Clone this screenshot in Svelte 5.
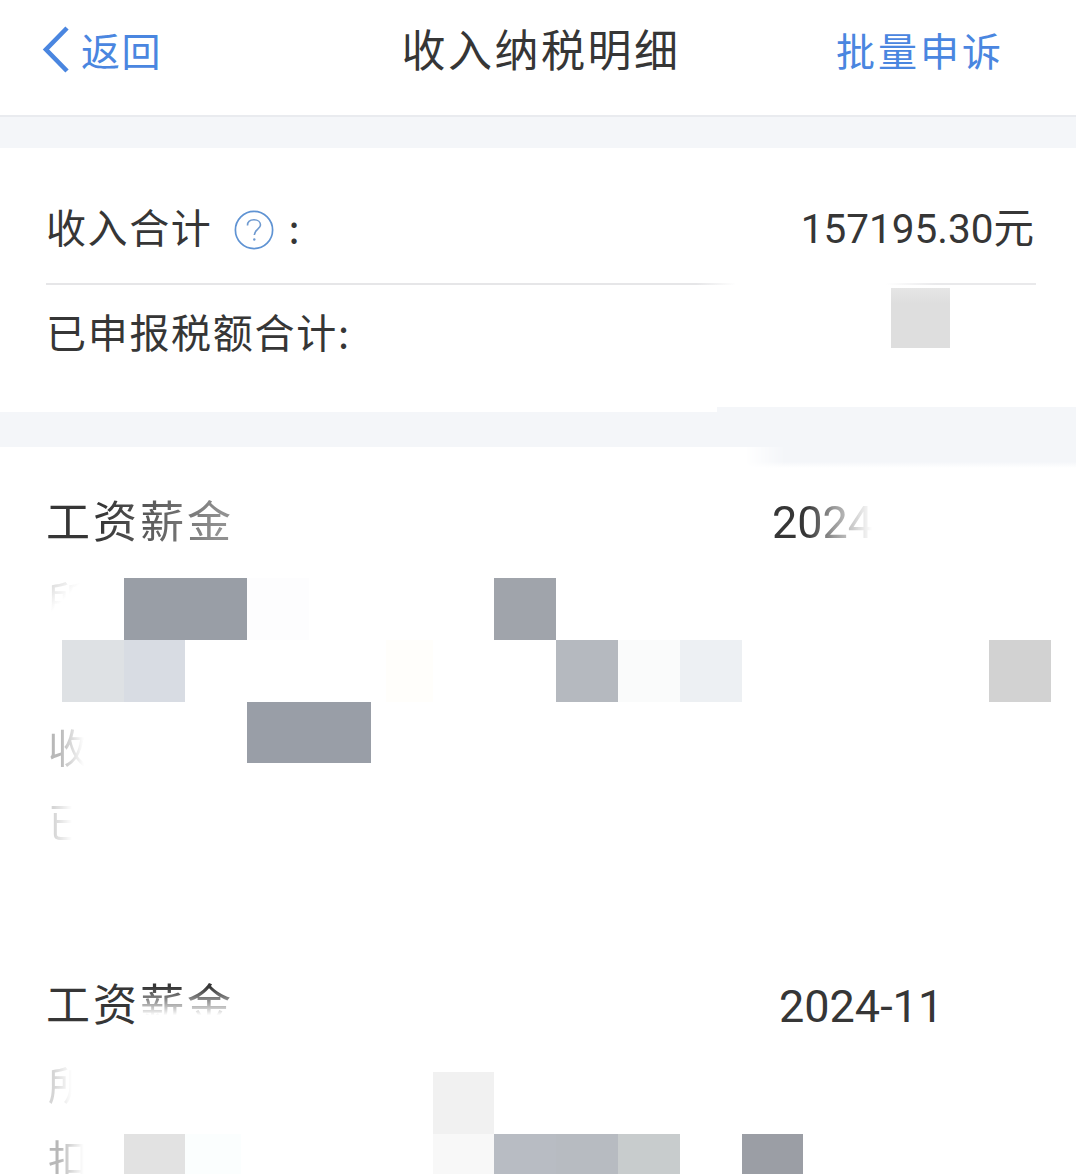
<script>
  const stepX = 61.8;
  const stepY = 61.75;
  const tiles = [
    { col: 2, row: 0, span: 2, color: '#999ea6' },
    { col: 4, row: 0, span: 1, color: '#fdfdfe' },
    { col: 8, row: 0, span: 1, color: '#a0a4ab' },
    { col: 1, row: 1, span: 1, color: '#dee1e4' },
    { col: 2, row: 1, span: 1, color: '#d8dce3' },
    { col: 6.25, row: 1, span: 0.75, color: '#fffefb' },
    { col: 9, row: 1, span: 1, color: '#b5b9bf' },
    { col: 10, row: 1, span: 1, color: '#fafbfb' },
    { col: 11, row: 1, span: 1, color: '#edf0f3' },
    { col: 16, row: 1, span: 1, color: '#d2d2d2' },
    { col: 4, row: 2, span: 2, color: '#999ea7' },
    { col: 7, row: 8, span: 1, color: '#f1f1f1' },
    { col: 2, row: 9, span: 1, color: '#e2e2e2' },
    { col: 3, row: 9, span: 0.9, color: '#fbfefe' },
    { col: 7, row: 9, span: 1, color: '#f8f8f8' },
    { col: 8, row: 9, span: 1, color: '#b8bcc3' },
    { col: 9, row: 9, span: 1, color: '#b7bbc1' },
    { col: 10, row: 9, span: 1, color: '#c8cccd' },
    { col: 12, row: 9, span: 1, color: '#9b9ea5' }
  ];
</script>

<div class="page">
  <header class="topbar">
    <div class="back">
      <svg class="chevron" viewBox="0 0 30 50" width="30" height="50" aria-hidden="true">
        <path d="M25 3 L4 24.5 L25 46" fill="none" stroke="#4a86e0" stroke-width="4.6" />
      </svg>
      <span class="back-text">返回</span>
    </div>
    <h1>收入纳税明细</h1>
    <div class="action">批量申诉</div>
  </header>

  <div class="band band-top"></div>

  <section class="summary">
    <div class="row row-income">
      <div class="label income-label">
        <span>收入合计</span>
        <svg class="help" viewBox="0 0 40 40" width="40" height="40" aria-hidden="true">
          <circle cx="20" cy="20" r="18.6" fill="none" stroke="#5f93d3" stroke-width="1.7" />
          <path d="M13.5 15.5 C13.5 11.5 16.5 9.8 20 9.8 C24 9.8 26.5 12 26.5 15 C26.5 19 20.3 19.5 20.3 25" fill="none" stroke="#6f9ad0" stroke-width="1.6" />
          <circle cx="20.3" cy="29.5" r="1.2" fill="#6f9ad0" />
        </svg>
        <span class="colon">:</span>
      </div>
      <div class="amount">157195.30元</div>
    </div>
    <div class="divider"></div>
    <div class="row row-tax">
      <div class="label tax-label">已申报税额合计:</div>
      <div class="redact"></div>
    </div>
  </section>

  <div class="band band-mid"></div>

  <section class="records">
    {#each tiles as t}
      <div
        class="tile"
        style="left:{t.col * stepX}px;top:{131 + t.row * stepY}px;width:{t.span * stepY}px;height:{stepY}px;background:{t.color}"
      ></div>
    {/each}

    <article class="record record-first">
      <div class="record-head">
        <h2 class="fade-soft">工资薪金</h2>
        <time class="date date-first">2024-12</time>
      </div>
      <div class="line"><span class="ghost ghost-corner">所</span></div>
      <div class="line"></div>
      <div class="line"><span class="ghost ghost-mid">收</span></div>
      <div class="line"><span class="ghost ghost-left">已</span></div>
    </article>

    <article class="record record-second">
      <div class="record-head">
        <h2><span>工资</span><span class="fade-strong">薪金</span></h2>
        <time class="date date-second">2024-11</time>
      </div>
      <div class="line"><span class="ghost ghost-left">所</span></div>
      <div class="line"><span class="ghost ghost-mid">扣</span></div>
    </article>
  </section>
</div>

<style>
  :global(body) {
    margin: 0;
    background: #fff;
  }

  .page {
    width: 1076px;
    height: 1174px;
    overflow: hidden;
    background: #fff;
    color: #363636;
    font-family: "Noto Sans CJK SC", "Noto Sans", sans-serif;
    font-weight: 400;
  }

  .topbar {
    height: 115px;
    box-sizing: border-box;
    padding: 0 42px 15px;
    display: grid;
    grid-template-columns: 1fr auto 1fr;
    align-items: center;
  }

  .back {
    display: flex;
    align-items: center;
    gap: 9px;
    color: #4a86e0;
    font-size: 39px;
    letter-spacing: 1.5px;
  }

  .back-text {
    margin-bottom: 3px;
  }

  .chevron {
    flex: none;
  }

  h1 {
    margin: 0 0 5px 6px;
    font-size: 44px;
    font-weight: 400;
    letter-spacing: 2.5px;
    line-height: 60px;
  }

  .action {
    justify-self: end;
    margin: 0 30px 3px 0;
    color: #4a86e0;
    font-size: 39px;
    letter-spacing: 3px;
  }

  .band {
    background: #f4f6f9;
  }

  .band-top {
    height: 31px;
    border-top: 2px solid #e9ebef;
  }

  .summary {
    height: 264px;
    box-sizing: border-box;
    padding: 0 40px 0 46px;
    display: flex;
    flex-direction: column;
  }

  .row {
    display: flex;
    align-items: center;
    justify-content: space-between;
  }

  .row-income {
    height: 135px;
    padding-top: 21px;
    box-sizing: border-box;
  }

  .label {
    display: flex;
    align-items: center;
    font-size: 40px;
  }

  .income-label {
    letter-spacing: 1.6px;
  }

  .help {
    margin: 8px 0 0 22px;
  }

  .colon {
    margin-left: 14px;
  }

  .amount {
    font-family: Roboto, "Noto Sans CJK SC", sans-serif;
    font-size: 40.5px;
    margin: 0 2px 2px 0;
  }

  .divider {
    height: 2px;
    background: linear-gradient(
      to right,
      #e6e6e8 0,
      #e6e6e8 650px,
      #fff 690px,
      #fff 840px,
      #e9e9eb 890px,
      #e9e9eb 100%
    );
  }

  .row-tax {
    flex: 1;
    align-items: flex-start;
    position: relative;
  }

  .tax-label {
    padding-top: 17px;
    letter-spacing: 1.7px;
  }

  .redact {
    position: absolute;
    left: 845px;
    top: 3px;
    width: 59px;
    height: 60px;
    background: linear-gradient(#e6e6e6, #dedede 25%);
  }

  .band-mid {
    height: 35px;
    position: relative;
  }

  .band-mid::after {
    content: "";
    position: absolute;
    left: 717px;
    right: 0;
    top: -5px;
    height: 40px;
    background: #f4f6f9;
  }

  .band-mid::before {
    content: "";
    position: absolute;
    left: 745px;
    right: 0;
    top: 35px;
    height: 21px;
    background: linear-gradient(to bottom, #f4f6f9 70%, #fff);
    -webkit-mask-image: linear-gradient(to right, transparent, #000 40px);
    mask-image: linear-gradient(to right, transparent, #000 40px);
  }

  .records {
    position: relative;
  }

  .tile {
    position: absolute;
  }

  .record-first {
    padding-top: 38px;
  }

  .record-second {
    padding-top: 111px;
  }

  .record-head {
    height: 78px;
    display: flex;
    align-items: flex-start;
    padding-left: 48px;
    position: relative;
  }

  .record-first .record-head {
    height: 76px;
  }

  h2 {
    margin: -3px 0 0 -2px;
    font-size: 44px;
    line-height: 74px;
    font-weight: 400;
    letter-spacing: 3px;
  }

  .fade-soft {
    -webkit-mask-image: linear-gradient(100deg, #000 30%, rgba(0, 0, 0, 0.55) 90%);
    mask-image: linear-gradient(100deg, #000 30%, rgba(0, 0, 0, 0.55) 90%);
  }

  .fade-strong {
    display: inline-block;
    -webkit-mask-image: linear-gradient(to bottom, #000 30%, rgba(0, 0, 0, 0.5) 50%, transparent 68%);
    mask-image: linear-gradient(to bottom, #000 30%, rgba(0, 0, 0, 0.5) 50%, transparent 68%);
  }

  .date {
    position: absolute;
    font-family: Roboto, sans-serif;
    font-size: 45px;
    line-height: 74px;
    white-space: nowrap;
  }

  .date-first {
    left: 772px;
    top: 1px;
    -webkit-mask-image: linear-gradient(to right, #000 35px, rgba(0, 0, 0, 0.5) 62px, transparent 100px);
    mask-image: linear-gradient(to right, #000 35px, rgba(0, 0, 0, 0.5) 62px, transparent 100px);
  }

  .date-second {
    left: 779px;
    top: 2px;
  }

  .line {
    height: 74px;
    padding-left: 48px;
    font-size: 40px;
    line-height: 74px;
    position: relative;
  }

  .ghost {
    display: inline-block;
    color: #8a8a8a;
  }

  .ghost-corner {
    opacity: 0.3;
    -webkit-mask-image: linear-gradient(135deg, #000 22%, transparent 48%);
    mask-image: linear-gradient(135deg, #000 22%, transparent 48%);
  }

  .ghost-left {
    opacity: 0.35;
    -webkit-mask-image: linear-gradient(to right, #000 15%, transparent 60%);
    mask-image: linear-gradient(to right, #000 15%, transparent 60%);
  }

  .ghost-mid {
    opacity: 0.6;
    -webkit-mask-image: linear-gradient(to right, #000 30%, transparent 90%);
    mask-image: linear-gradient(to right, #000 30%, transparent 90%);
  }
</style>
